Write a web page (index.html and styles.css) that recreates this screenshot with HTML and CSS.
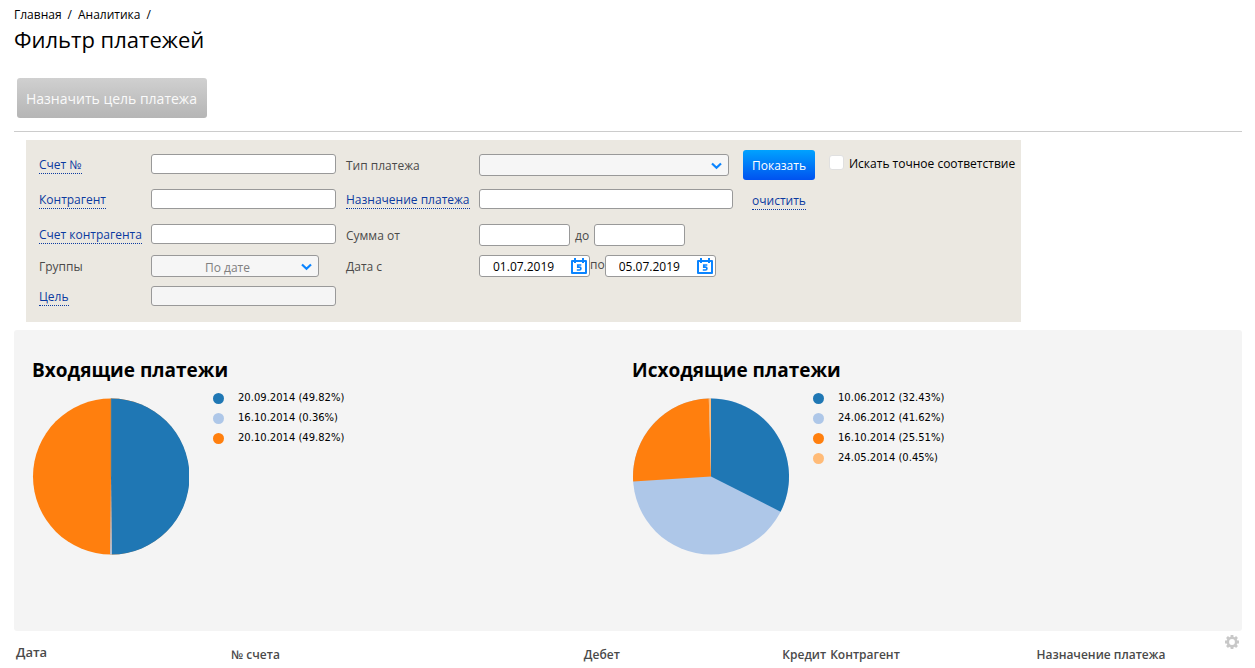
FILE: index.html
```html
<!DOCTYPE html>
<html lang="ru">
<head>
<meta charset="utf-8">
<title>Фильтр платежей</title>
<link rel="stylesheet" href="styles.css">
</head>
<body>
<svg class="sprite" aria-hidden="true">
  <symbol id="chevron" viewBox="0 0 11 8"><path d="M1 1.500l4.500 4.300L10 1.500" fill="none" stroke="#0a84ff" stroke-width="2.200"/></symbol>
  <symbol id="calendar" viewBox="0 0 16 16">
    <path d="M1 3h14v12H1zM4 0v5M12 0v5" fill="none" stroke="#0a84ff" stroke-width="2" stroke-linejoin="round"/>
    <path d="M10.300 7H6.800v2.200h1.700a1.300 1.300 0 0 1 0 2.800H5.800" fill="none" stroke="#0a84ff" stroke-width="1.700"/>
  </symbol>
</svg>
<header class="head">
  <nav class="crumbs"><a href="#">Главная</a><span>/</span><a href="#">Аналитика</a><span>/</span></nav>
  <h1 class="title">Фильтр платежей</h1>
  <div class="toolbar"><button class="btn-assign" type="button" disabled>Назначить цель платежа</button></div>
</header>
<main>
  <form class="filter">
    <div class="fields">
      <label class="hint" for="acc"><span>Счет №</span></label>
      <div><input class="box wide" id="acc" type="text"></div>
      <label for="type">Тип платежа</label>
      <div class="select long"><select class="box" id="type"><option></option></select><svg class="arrow"><use href="#chevron"/></svg></div>

      <label class="hint" for="agent"><span>Контрагент</span></label>
      <div><input class="box wide" id="agent" type="text"></div>
      <label class="hint" for="purpose"><span>Назначение платежа</span></label>
      <div><input class="box purpose" id="purpose" type="text"></div>

      <label class="hint" for="agentacc"><span>Счет контрагента</span></label>
      <div><input class="box wide" id="agentacc" type="text"></div>
      <label for="sum1">Сумма от</label>
      <div class="range sums"><input class="box tall sum" id="sum1" type="text"><label for="sum2">до</label><input class="box tall sum" id="sum2" type="text"></div>

      <label for="group">Группы</label>
      <div class="select group"><select class="box" id="group"><option>По дате</option></select><svg class="arrow"><use href="#chevron"/></svg></div>
      <label for="date1">Дата с</label>
      <div class="range">
        <span class="date"><input class="box tall" id="date1" type="text" value="01.07.2019"><svg class="cal"><use href="#calendar"/></svg></span>
        <label for="date2">по</label>
        <span class="date"><input class="box tall" id="date2" type="text" value="05.07.2019"><svg class="cal"><use href="#calendar"/></svg></span>
      </div>

      <label class="hint" for="goal"><span>Цель</span></label>
      <div><input class="box wide muted" id="goal" type="text"></div>
    </div>
    <div class="actions">
      <button class="btn-show" type="submit">Показать</button>
      <a class="clear" href="#">очистить</a>
    </div>
    <label class="exact"><input type="checkbox">Искать точное соответствие</label>
  </form>

  <section class="charts">
    <article>
      <h2>Входящие платежи</h2>
      <div class="chart">
        <svg class="pie" viewBox="-79 -78.500 157 157">
          <circle r="78" fill="#ff7f0e"/>
          <path d="M0 0V-78A78 78 0 0 1 .9 78z" fill="#1f77b4"/>
          <path d="M0 0L.9 78H-.9z" fill="#aec7e8"/>
          <path d="M0 0V-78" stroke="#8c8c78" stroke-width=".6"/>
        </svg>
        <ul class="legend">
          <li class="c1">20.09.2014 (49.82%)</li>
          <li class="c2">16.10.2014 (0.36%)</li>
          <li class="c3">20.10.2014 (49.82%)</li>
        </ul>
      </div>
    </article>
    <article>
      <h2>Исходящие платежи</h2>
      <div class="chart">
        <svg class="pie" viewBox="-79 -78.500 157 157">
          <circle r="78" fill="#aec7e8"/>
          <path d="M0 0V-78A78 78 0 0 1 69.600 35.200z" fill="#1f77b4"/>
          <path d="M0 0L-77.850 4.900A78 78 0 0 1 -2.200 -77.970z" fill="#ff7f0e"/>
          <path d="M0 0L-2.200 -77.970L0 -78z" fill="#ffbb78"/>
        </svg>
        <ul class="legend">
          <li class="c1">10.06.2012 (32.43%)</li>
          <li class="c2">24.06.2012 (41.62%)</li>
          <li class="c3">16.10.2014 (25.51%)</li>
          <li class="c4">24.05.2014 (0.45%)</li>
        </ul>
      </div>
    </article>
  </section>

  <section class="results">
    <table>
      <thead><tr>
        <th class="date-col">Дата</th><th class="acc-col">№ счета</th><th class="debit-col">Дебет</th><th class="credit-col">Кредит</th><th class="agent-col">Контрагент</th><th>Назначение платежа</th>
      </tr></thead>
    </table>
    <button class="gear" type="button" aria-label="Настройки">
      <svg viewBox="0 0 14 14"><g fill="none" stroke="#c8c8c8"><circle cx="7" cy="7" r="4.200" stroke-width="2.600"/><path d="M7 0v2M7 12v2M0 7h2M12 7h2M2 2l1.500 1.500M10.500 10.500L12 12M2 12l1.500-1.500M10.500 3.500L12 2" stroke-width="2.800"/></g></svg>
    </button>
  </section>
</main>
</body>
</html>
```
FILE: styles.css
```css
* { box-sizing: border-box; }
body {
  margin: 0;
  padding: 7px 13px 0 14px;
  font: 12px/24px "Open Sans", "Noto Sans", sans-serif;
  color: #000;
  background: #fff;
}
input, select, button { font: inherit; }
.sprite { display: none; }

.crumbs { display: flex; gap: 6px; line-height: 16px; }
.crumbs a { color: #000; text-decoration: none; }
.title { margin: 0; font-size: 22px; line-height: 32px; font-weight: 400; }
.toolbar { padding: 23px 3px 13px; border-bottom: 1px solid #ccc; }
.btn-assign {
  display: block;
  height: 40px;
  padding: 2px 10px 0 9px;
  border: 0;
  border-radius: 3px;
  font-size: 14px;
  color: #fafafa;
  background: linear-gradient(#d0d0d0, #b5b5b5);
}

.filter {
  display: flex;
  align-items: flex-start;
  width: fit-content;
  margin: 8px 12px;
  padding: 10px 6px 0 13px;
  background: #ebe8e1;
}
.fields {
  display: grid;
  grid-template-columns: 112px 195px 133px 264px;
  grid-template-rows: 35px 35px 31px 31px 36px;
  padding-top: 4px;
  color: #4a4a4a;
}
.fields > * { display: flex; align-items: flex-start; }
.hint { padding-top: 3px; }
.hint span, .clear {
  border-bottom: 1px dotted #0b3aa0;
  line-height: 16px;
  color: #0b3aa0;
}
.box {
  display: block;
  height: 20px;
  padding: 0;
  border: 1px solid #999;
  border-radius: 3px;
  background: #fff;
}
.wide { width: 185px; }
.purpose { width: 254px; }
.sum { width: 91px; }
.tall { height: 22px; }
.muted { background: #f5f5f5; }
.select { position: relative; height: 22px; }
.long { width: 250px; }
.group { width: 168px; }
.select select {
  appearance: none;
  width: 100%;
  height: 22px;
  padding-right: 15px;
  text-align-last: center;
  color: #808080;
  background: #f6f6f6;
}
.arrow {
  position: absolute;
  top: 8px;
  right: 7px;
  width: 11px;
  height: 8px;
  pointer-events: none;
}
.range label { line-height: 20px; }
.sums { gap: 5px; }
.sums label { line-height: 24px; }
.date { position: relative; width: 111px; }
.date input { width: 111px; padding: 1px 0 0 13px; color: #000; }
.cal { position: absolute; top: 3px; right: 3px; width: 16px; height: 16px; }

.actions { display: flex; flex-direction: column; align-items: center; gap: 13px; }
.btn-show {
  width: 72px;
  height: 30px;
  padding: 2px 0 0;
  border: 0;
  border-radius: 3px;
  color: #fff;
  background: linear-gradient(#00a2ff, #0052f0);
}
.clear { text-decoration: none; }
.exact { display: flex; gap: 5px; margin-left: 14px; padding-top: 2px; }
.exact input {
  appearance: none;
  width: 15px;
  height: 15px;
  margin: 3px 0 0;
  border: 1px solid #e0e0e0;
  border-radius: 3px;
  background: #fff;
}

.charts {
  display: grid;
  grid-template-columns: 1fr 1fr;
  padding: 26px 10px 76px 18px;
  border-radius: 3px;
  background: #f4f4f4;
}
h2 { margin: 0; font-size: 19px; line-height: 28px; font-weight: 700; }
.chart { display: flex; gap: 24px; padding-top: 14px; }
.pie { width: 157px; height: 157px; }
.legend {
  margin: -10px 0 0;
  padding: 0;
  list-style: none;
  font-family: "DejaVu Sans", sans-serif;
  font-size: 10px;
  line-height: 20px;
}
.legend li { display: flex; align-items: center; gap: 14px; }
.legend li::before { content: ""; width: 11px; height: 11px; border-radius: 50%; background: currentColor; }
.c1::before { color: #1f77b4; }
.c2::before { color: #aec7e8; }
.c3::before { color: #ff7f0e; }
.c4::before { color: #ffbb78; }

.results { position: relative; padding-top: 10px; }
table { width: 100%; table-layout: fixed; border-collapse: collapse; }
th {
  padding: 3px 2px 0;
  text-align: left;
  font-size: 12px;
  line-height: 22px;
  font-weight: 600;
  color: #4a4a4a;
  vertical-align: top;
  white-space: nowrap;
}
.date-col { width: 17.5%; padding-top: 0; font-size: 13px; }
.acc-col { width: 16%; }
.debit-col { width: 16%; text-align: right; }
.credit-col { width: 16.8%; text-align: right; }
.agent-col { width: 16.8%; }
.gear { position: absolute; top: 4px; right: 3px; padding: 0; border: 0; background: none; }
.gear svg { display: block; width: 14px; height: 14px; }
```
